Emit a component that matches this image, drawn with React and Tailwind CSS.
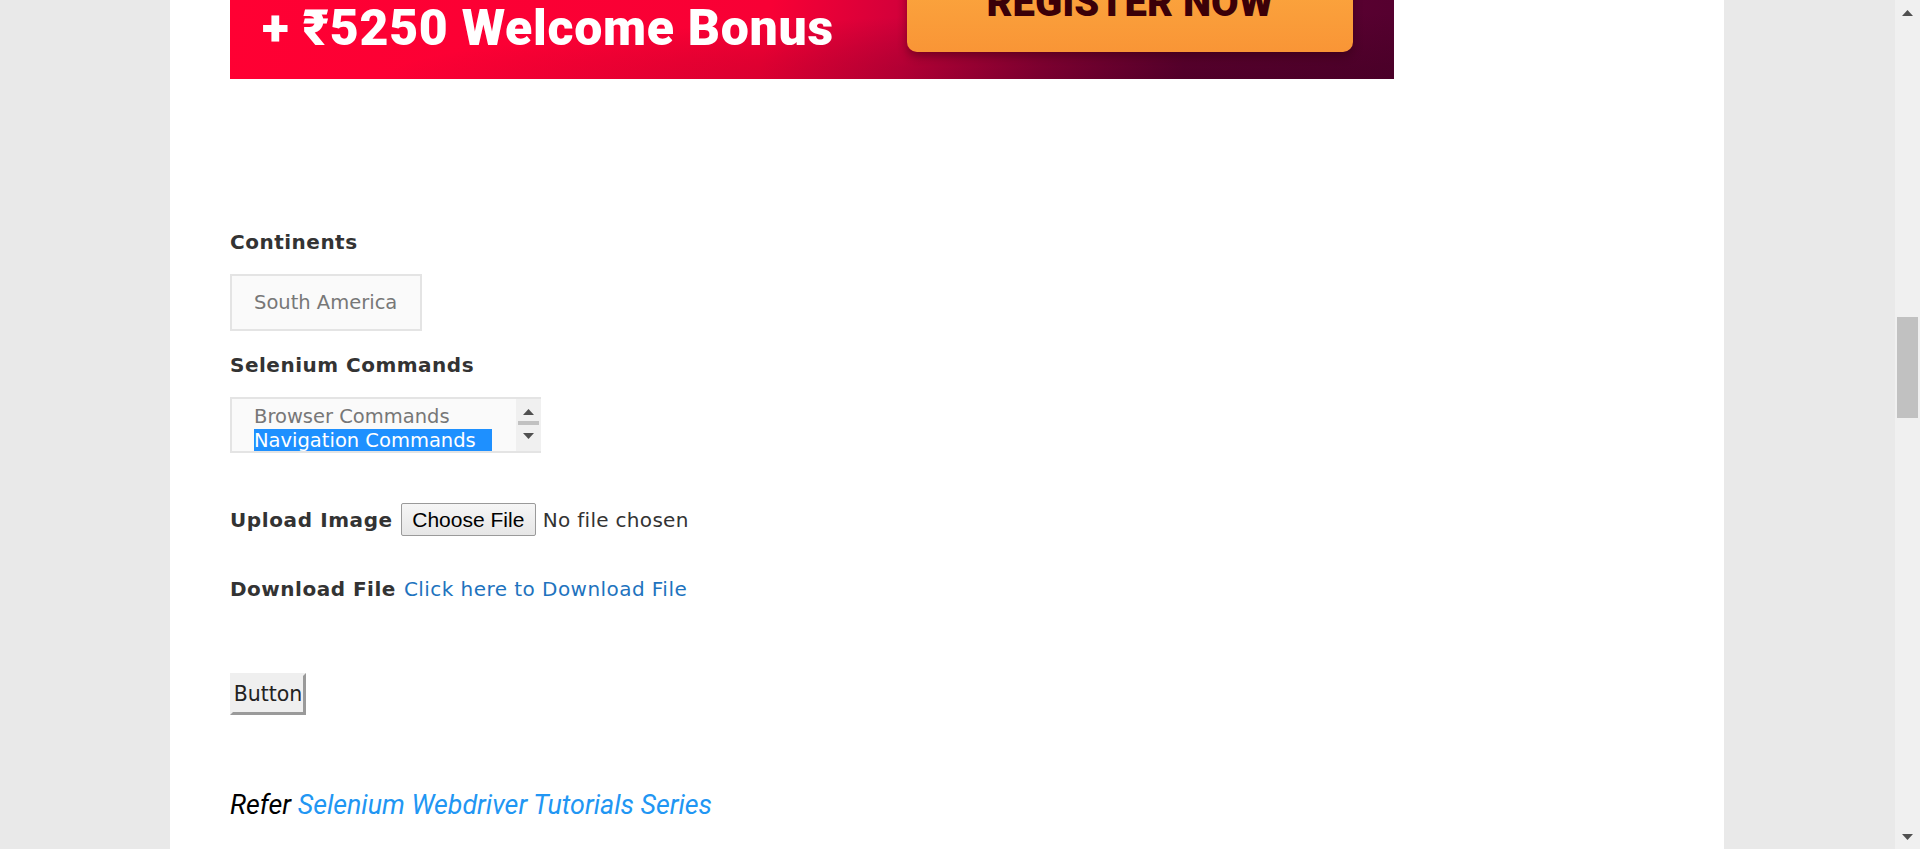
import React from "react";

function Tri({ up, className }) {
  return (
    <svg width="11" height="6" viewBox="0 0 11 6" className={className}>
      {up ? <polygon points="5.5,0 11,6 0,6" fill="#505050" /> : <polygon points="0,0 11,0 5.5,6" fill="#505050" />}
    </svg>
  );
}

export default function App() {
  const verd = { fontFamily: '"DejaVu Sans", Verdana, sans-serif' };
  return (
    <div className="flex h-[849px] w-[1920px] overflow-hidden bg-[#e9e9e9]">
      <div className="w-[170px] shrink-0" />
      <div className="flex w-[1554px] shrink-0 flex-col bg-white pl-[60px]" style={verd}>
        {/* banner */}
        <div className="relative h-[79px] w-[1164px] shrink-0 overflow-hidden bg-[linear-gradient(100deg,#ff0033_0%,#f80035_46%,#d0003b_58%,#930037_70%,#620032_82%,#55002f_100%)]">
          <div className="absolute inset-0 bg-[radial-gradient(ellipse_at_85%_100%,rgba(40,0,20,0.3),transparent_60%)]" />
          <div
            className="absolute left-[32px] top-[3px] whitespace-nowrap text-[50px] font-black leading-none tracking-[0.7px] text-white"
            style={{ fontFamily: 'Roboto, "Noto Sans", "DejaVu Sans", sans-serif' }}
          >
            + ₹5250 Welcome Bonus
          </div>
          <div className="absolute left-[677px] top-[-20px] flex h-[72px] w-[446px] justify-center rounded-[10px] bg-[linear-gradient(180deg,#fba63e,#f99536)] shadow-[0_4px_10px_rgba(40,0,10,0.45)]">
            <div
              className="mt-[3px] whitespace-nowrap text-[40px] font-black leading-none text-[#3b0008]"
              style={{ fontFamily: 'Roboto, "DejaVu Sans", sans-serif' }}
            >
              REGISTER NOW
            </div>
          </div>
        </div>

        <div className="mt-[151px] text-[20px] font-bold leading-[24px] tracking-[0.5px] text-[#333]">Continents</div>
        <div className="mt-[20px] flex h-[57px] w-[192px] items-center border-2 border-[#e4e4e4] bg-[#fafafa] pl-[22px] text-[19.5px] text-[#777]">
          South America
        </div>

        <div className="mt-[22px] text-[20px] font-bold leading-[24px] tracking-[0.5px] text-[#333]">Selenium Commands</div>
        <div className="mt-[20px] flex h-[56px] w-[311px] border-2 border-r-0 border-[#e4e4e4] bg-[#fafafa]">
          <div className="flex-1 overflow-hidden pl-[22px] pr-[24px] pt-[6px] text-[19.5px] leading-[24px]">
            <div className="text-[#777]">Browser Commands</div>
            <div className="bg-[#1e90ff] text-white">Navigation Commands</div>
          </div>
          <div className="flex w-[25px] shrink-0 flex-col items-center bg-[#f0f0f0]">
            <Tri up className="mt-[10px]" />
            <div className="mt-[6px] h-[4px] w-[21px] bg-[#c1c1c1]" />
            <Tri className="mt-[8px]" />
          </div>
        </div>

        <div className="mt-[50px] flex h-[33px] items-center text-[20px] leading-[24px] text-[#333]">
          <span className="font-bold tracking-[0.6px]">Upload Image</span>
          <span
            className="ml-[8px] flex h-[33px] w-[135px] items-center justify-center rounded-[2px] border border-[#9a9a9a] bg-[linear-gradient(180deg,#f6f6f6,#e6e6e6)] text-[21px] text-black"
            style={{ fontFamily: '"Liberation Sans", Arial, sans-serif' }}
          >
            Choose File
          </span>
          <span className="ml-[7px] tracking-[0.3px]">No file chosen</span>
        </div>

        <div className="mt-[41px] flex text-[20px] leading-[24px] text-[#333]">
          <span className="font-bold tracking-[0.5px]">Download File</span>
          <span className="ml-[8px] tracking-[0.45px] text-[#1e73be]">Click here to Download File</span>
        </div>

        <div className="mt-[72px] flex">
          <div className="flex h-[42px] w-[76px] items-center justify-center border-[3px] border-l-[#efefef] border-t-[#efefef] border-r-[#9a9a9a] border-b-[#9a9a9a] bg-[#efefef] text-[20.5px] text-[#222]">
            Button
          </div>
        </div>

        <div
          className="mt-[74px] text-[26.8px] italic leading-[32px]"
          style={{ fontFamily: 'Roboto, "Liberation Sans", sans-serif' }}
        >
          <span className="text-black">Refer </span>
          <span className="text-[#2196f3]">Selenium Webdriver Tutorials Series</span>
        </div>
      </div>
      <div className="w-[171px] shrink-0" />
      <div className="relative flex w-[25px] shrink-0 flex-col items-center bg-[#f0f0f0]">
        <Tri up className="mt-[10px]" />
        <div className="mt-[301px] h-[101px] w-[21px] bg-[#c1c1c1]" />
        <div className="flex-1" />
        <Tri className="mb-[9px]" />
      </div>
    </div>
  );
}
